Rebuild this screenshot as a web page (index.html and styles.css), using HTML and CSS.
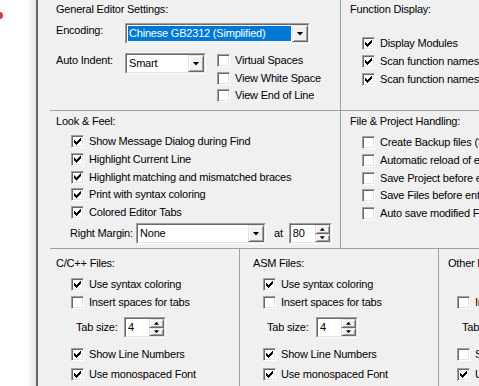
FILE: index.html
```html
<!DOCTYPE html>
<html lang="en">
<head>
    <meta charset="UTF-8">
    <title>Editor Configuration</title>
    <link rel="stylesheet" href="styles.css">
</head>
<body>

    <!-- left window edge -->
    <div class="side"><span class="dot"></span></div>

    <div class="dialog">

        <!-- General / Function display -->
        <div class="row row-top">
            <section class="cell general">
                <div class="title">General Editor Settings:</div>
                <div class="field enc">
                    <span class="lbl">Encoding:</span>
                    <div class="combo w-enc sel"><div class="in"><span class="val">Chinese GB2312 (Simplified)</span><span class="drop"></span></div></div>
                </div>
                <div class="field indent">
                    <span class="lbl">Auto Indent:</span>
                    <div class="combo w-indent"><div class="in"><span class="val">Smart</span><span class="drop"></span></div></div>
                    <div class="list">
                        <div class="chk"><span class="box"></span>Virtual Spaces</div>
                        <div class="chk"><span class="box"></span>View White Space</div>
                        <div class="chk"><span class="box"></span>View End of Line</div>
                    </div>
                </div>
            </section>
            <section class="cell func">
                <div class="title">Function Display:</div>
                <div class="list">
                    <div class="chk"><span class="box on"></span>Display Modules</div>
                    <div class="chk"><span class="box on"></span>Scan function names in project files</div>
                    <div class="chk"><span class="box on"></span>Scan function names in current editor file</div>
                </div>
            </section>
        </div>

        <!-- Look & Feel / File handling -->
        <div class="row row-mid">
            <section class="cell look">
                <div class="title">Look &amp; Feel:</div>
                <div class="list">
                    <div class="chk"><span class="box on"></span>Show Message Dialog during Find</div>
                    <div class="chk"><span class="box on"></span>Highlight Current Line</div>
                    <div class="chk"><span class="box on"></span>Highlight matching and mismatched braces</div>
                    <div class="chk"><span class="box on"></span>Print with syntax coloring</div>
                    <div class="chk"><span class="box on"></span>Colored Editor Tabs</div>
                </div>
                <div class="margin-row">
                    <span class="lbl-margin">Right Margin:</span>
                    <div class="combo w-margin"><div class="in"><span class="val">None</span><span class="drop"></span></div></div>
                    <span class="at">at</span>
                    <div class="spin w-80"><div class="in"><span class="val">80</span><span class="arrows"><span class="up"></span><span class="dn"></span></span></div></div>
                </div>
            </section>
            <section class="cell files">
                <div class="title">File &amp; Project Handling:</div>
                <div class="list">
                    <div class="chk"><span class="box"></span>Create Backup files (*.BAK)</div>
                    <div class="chk"><span class="box"></span>Automatic reload of externally modified files</div>
                    <div class="chk"><span class="box"></span>Save Project before entering Debug</div>
                    <div class="chk"><span class="box"></span>Save Files before entering Debug</div>
                    <div class="chk"><span class="box"></span>Auto save modified Files</div>
                </div>
            </section>
        </div>

        <!-- File type settings -->
        <div class="row row-bot">
            <section class="cell ftype cpp">
                <div class="title">C/C++ Files:</div>
                <div class="list top-list">
                    <div class="chk"><span class="box on"></span>Use syntax coloring</div>
                    <div class="chk"><span class="box"></span>Insert spaces for tabs</div>
                </div>
                <div class="tabrow">
                    <span class="lbl-tab">Tab size:</span>
                    <div class="spin w-tab"><div class="in"><span class="val">4</span><span class="arrows"><span class="up"></span><span class="dn"></span></span></div></div>
                </div>
                <div class="list bottom-list">
                    <div class="chk"><span class="box on"></span>Show Line Numbers</div>
                    <div class="chk"><span class="box on"></span>Use monospaced Font</div>
                </div>
            </section>
            <section class="cell ftype asm">
                <div class="title">ASM Files:</div>
                <div class="list top-list">
                    <div class="chk"><span class="box on"></span>Use syntax coloring</div>
                    <div class="chk"><span class="box"></span>Insert spaces for tabs</div>
                </div>
                <div class="tabrow">
                    <span class="lbl-tab">Tab size:</span>
                    <div class="spin w-tab"><div class="in"><span class="val">4</span><span class="arrows"><span class="up"></span><span class="dn"></span></span></div></div>
                </div>
                <div class="list bottom-list">
                    <div class="chk"><span class="box on"></span>Show Line Numbers</div>
                    <div class="chk"><span class="box on"></span>Use monospaced Font</div>
                </div>
            </section>
            <section class="cell ftype other">
                <div class="title">Other Files:</div>
                <div class="list top-list">
                    <div class="chk blank"><span class="box"></span>Use syntax coloring</div>
                    <div class="chk"><span class="box"></span>Insert spaces for tabs</div>
                </div>
                <div class="tabrow">
                    <span class="lbl-tab">Tab size:</span>
                    <div class="spin w-tab"><div class="in"><span class="val">4</span><span class="arrows"><span class="up"></span><span class="dn"></span></span></div></div>
                </div>
                <div class="list bottom-list">
                    <div class="chk"><span class="box"></span>Show Line Numbers</div>
                    <div class="chk"><span class="box on"></span>Use monospaced Font</div>
                </div>
            </section>
        </div>
    </div>

</body>
</html>
```

FILE: styles.css
```css
/* Reset */
* {
    margin: 0;
    padding: 0;
    box-sizing: border-box;
}

html, body {
    width: 479px;
    height: 386px;
    overflow: hidden;
}

body {
    display: flex;
    font-family: "Liberation Sans", Arial, sans-serif;
    font-size: 11px;
    line-height: 13px;
    letter-spacing: -0.2px;
    color: #000;
    background: #f0f0f0;
}

/* Window edge on the left */
.side {
    position: relative;
    width: 38px;
    flex: none;
    background: linear-gradient(to right, #fff 27px, #e4e4e4 36px);
    border-right: 2px solid #666;
}

.dot {
    position: absolute;
    left: -4px;
    top: 12px;
    width: 7px;
    height: 7px;
    border-radius: 50%;
    background: radial-gradient(circle, #e33b2a 55%, #4a6fd0);
}

.dialog {
    flex: 1;
    min-width: 0;
    padding-left: 12px;
}

/* Group rows */
.row {
    display: grid;
}

.row-top {
    height: 110px;
    grid-template-columns: 290px minmax(0, 1fr);
}

.row-mid {
    height: 138px;
    grid-template-columns: 290px minmax(0, 1fr);
    border-top: 1px solid #a0a0a0;
}

.row-bot {
    height: 138px;
    grid-template-columns: 189px 199px minmax(0, 1fr);
    border-top: 1px solid #a0a0a0;
}

.cell {
    min-width: 0;
    white-space: nowrap;
}

.cell + .cell {
    border-left: 1px solid #a0a0a0;
}

.list {
    display: flex;
    flex-direction: column;
}

/* Check boxes */
.chk {
    display: flex;
    align-items: center;
    gap: 5px;
    height: 13px;
}

.chk.blank {
    visibility: hidden;
}

.box {
    width: 13px;
    height: 13px;
    flex: none;
    display: flex;
    align-items: center;
    justify-content: center;
    background: #fff;
    border: 1px solid;
    border-color: #a0a0a0 #fff #fff #a0a0a0;
    box-shadow: inset 1px 1px #696969, inset -1px -1px #e3e3e3;
}

.box.on::after {
    content: "";
    width: 9px;
    height: 9px;
    background: #000;
    clip-path: polygon(7px 1px, 8px 1px, 8px 4px, 7px 4px, 7px 5px, 6px 5px, 6px 6px, 5px 6px, 5px 7px, 4px 7px, 4px 8px, 3px 8px, 3px 7px, 2px 7px, 2px 6px, 1px 6px, 1px 3px, 2px 3px, 2px 4px, 3px 4px, 3px 5px, 4px 5px, 4px 4px, 5px 4px, 5px 3px, 6px 3px, 6px 2px, 7px 2px);
}

/* Combo boxes and spin edits */
.combo, .spin {
    height: 21px;
    flex: none;
    background: #fff;
    border: 1px solid;
    border-color: #a0a0a0 #fff #fff #a0a0a0;
}

.combo .in, .spin .in {
    display: flex;
    height: 100%;
    border: 1px solid;
    border-color: #696969 #e3e3e3 #e3e3e3 #696969;
}

.val {
    flex: 1;
    padding-left: 2px;
    line-height: 17px;
}

.sel .val {
    margin: 1px;
    padding-left: 1px;
    line-height: 15px;
    background: #0078d7;
    color: #fff;
}

.drop, .up, .dn {
    display: flex;
    align-items: center;
    justify-content: center;
    background: #f0f0f0;
    border: 1px solid;
    border-color: #e3e3e3 #696969 #696969 #e3e3e3;
    box-shadow: inset 1px 1px #fff, inset -1px -1px #a0a0a0;
}

.drop {
    width: 16px;
    flex: none;
}

.drop::after {
    content: "";
    width: 7px;
    height: 4px;
    background: #000;
    clip-path: polygon(0 0, 100% 0, 50% 100%);
}

.arrows {
    width: 15px;
    flex: none;
    display: flex;
    flex-direction: column;
}

.up, .dn {
    flex: 1;
}

.up::after, .dn::after {
    content: "";
    width: 5px;
    height: 3px;
    background: #000;
}

.up::after {
    clip-path: polygon(50% 0, 100% 100%, 0 100%);
}

.dn::after {
    clip-path: polygon(0 0, 100% 0, 50% 100%);
}

/* General Editor Settings */
.general {
    padding: 3px 0 0 6px;
}

.field {
    display: flex;
    align-items: flex-start;
}

.lbl {
    width: 69px;
    padding-top: 1px;
}

.enc {
    margin-top: 7px;
}

.indent {
    margin-top: 9px;
}

.w-enc {
    width: 185px;
}

.w-indent {
    width: 81px;
}

.indent .list {
    margin: 1px 0 0 11px;
    gap: 4.5px;
}

/* Function Display */
.func {
    padding: 3px 0 0 9px;
}

.func .list {
    margin: 21px 0 0 12px;
    gap: 5px;
}

/* Look & Feel */
.look {
    padding: 4px 0 0 6px;
}

.look .list {
    margin: 7px 0 0 15px;
    gap: 4.75px;
}

.margin-row {
    display: flex;
    align-items: center;
    margin: 4px 0 0 14px;
}

.lbl-margin {
    width: 66px;
}

.w-margin {
    width: 130px;
}

.at {
    margin: 0 6px 0 8px;
}

.w-80 {
    width: 43px;
}

/* File & Project Handling */
.files {
    padding: 4px 0 0 9px;
}

.files .list {
    margin: 8px 0 0 12px;
    gap: 4.75px;
}

/* File type groups */
.ftype {
    padding-top: 7.5px;
}

.top-list {
    margin-top: 8.5px;
    gap: 5px;
}

.tabrow {
    display: flex;
    align-items: center;
    margin-top: 8px;
}

.lbl-tab {
    width: 48px;
}

.w-tab {
    width: 42px;
}

.bottom-list {
    margin-top: 10px;
    gap: 7px;
}

.cpp {
    padding-left: 6px;
}

.cpp .list {
    margin-left: 15px;
}

.cpp .tabrow {
    margin-left: 20px;
}

.asm {
    padding-left: 13px;
}

.asm .list {
    margin-left: 10px;
}

.asm .tabrow {
    margin-left: 14px;
}

.asm .lbl-tab {
    width: 49px;
}

.other {
    padding-left: 9px;
}

.other .list {
    margin-left: 9px;
}

.other .tabrow {
    margin-left: 14px;
}
```
